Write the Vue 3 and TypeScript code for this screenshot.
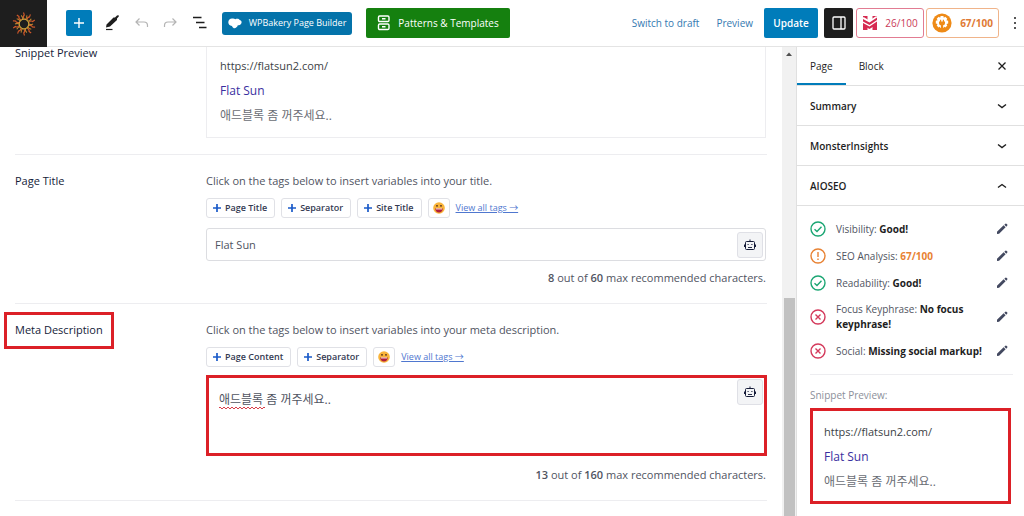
<script setup lang="ts">
import { ref } from 'vue'

interface Check {
  state: 'good' | 'warn' | 'bad'
  label: string
  value: string
}

const siteUrl = 'https://flatsun2.com/'
const pageTitle = ref('Flat Sun')
const metaDescription = ref('애드블록 좀 꺼주세요..')
const titleTags = ['Page Title', 'Separator', 'Site Title']
const descriptionTags = ['Page Content', 'Separator']
const panels = [
  { name: 'Summary', open: false },
  { name: 'MonsterInsights', open: false },
  { name: 'AIOSEO', open: true },
]
const checks: Check[] = [
  { state: 'good', label: 'Visibility:', value: 'Good!' },
  { state: 'warn', label: 'SEO Analysis:', value: '67/100' },
  { state: 'good', label: 'Readability:', value: 'Good!' },
  { state: 'bad', label: 'Focus Keyphrase:', value: 'No focus keyphrase!' },
  { state: 'bad', label: 'Social:', value: 'Missing social markup!' },
]
const rays = Array.from({ length: 20 }, (_, i) => i * 18)
</script>

<template>
  <div class="editor">
    <header class="topbar">
      <a class="site" href="#" aria-label="View pages">
        <svg viewBox="0 0 24 24" width="24" height="24" fill="none">
          <g v-for="(a, i) in rays" :key="a" :transform="`rotate(${a} 12 12)`">
            <path :d="i % 2 ? 'M12 7 Q13.200 5.500 12 3' : 'M12 7 Q10.500 4.500 12.300 3 L11.500 .5'" :stroke="i % 2 ? '#b98530' : '#d2592a'" stroke-width="1.100" />
          </g>
          <circle cx="12" cy="12" r="4.800" stroke="#c9a23c" stroke-width="1.200" fill="#1e1e1e" />
        </svg>
      </a>
      <div class="tools">
        <button class="add" aria-label="Add block">
          <svg viewBox="0 0 26 26" width="26" height="26"><path d="M13 8v10M8 13h10" stroke="#fff" stroke-width="1.400" /></svg>
        </button>
        <button class="tool" aria-label="Tools">
          <svg viewBox="0 0 18 18" width="18" height="18"><path d="M3.500 10.500 10.500 3.500l1.500 0 2-2q2.200-1 1.800 1L14 4.500l0 1.500L7 12.500 3 13.500z" fill="#1e1e1e" /><path d="M3 15.500h6.500" stroke="#1e1e1e" stroke-width="1.200" /></svg>
        </button>
        <button class="tool" aria-label="Undo" disabled>
          <svg viewBox="0 0 18 18" width="18" height="18" fill="none" stroke="#b4b4b4" stroke-width="1.200"><path d="M7.500 4.500 4 8l3.500 3.500M4 8h8q3.500 0 3.500 3.500V13" /></svg>
        </button>
        <button class="tool" aria-label="Redo" disabled>
          <svg viewBox="0 0 18 18" width="18" height="18" fill="none" stroke="#b4b4b4" stroke-width="1.200"><path d="M11.500 4.500 15 8l-3.500 3.500M15 8H7Q3.500 8 3.500 11.500V13" /></svg>
        </button>
        <button class="tool" aria-label="Document overview">
          <svg viewBox="0 0 18 18" width="18" height="18" stroke="#1e1e1e" stroke-width="1.300"><path d="M3 3.500h8.500M6 8.500h8.500M9 13.500h7.500" /></svg>
        </button>
      </div>
      <button class="bakery">
        <svg viewBox="0 0 14 11" width="14" height="11" fill="#fff"><path d="M4 .6C5.500.2 6.500.7 7.300 1.300 9 .5 11 .8 11.700 2c1.700.3 2.300 1.800 1.700 3.200C12.800 7 11 7.200 9.800 7.300 9.300 9.500 7 10.700 5.500 10 4.600 9.600 4.200 8.600 4 8 1.500 7.700.3 6 .3 4.200.3 2.200 2 .6 4 .6z" /></svg>
        <span>WPBakery Page Builder</span>
      </button>
      <button class="patterns">
        <svg viewBox="0 0 14 16" width="14" height="16" fill="none" stroke="#fff" stroke-width="1.400"><rect x="1.500" y="1" width="10.500" height="5.500" rx="1.200" /><rect x="1.500" y="9" width="10.500" height="5.500" rx="1.200" /><path d="M5 3.700h3.500M5 11.700h3.500" /></svg>
        <span>Patterns &amp; Templates</span>
      </button>
      <div class="actions">
        <button class="link">Switch to draft</button>
        <button class="link preview">Preview</button>
        <button class="update">Update</button>
        <button class="panel-toggle" aria-label="Settings">
          <svg viewBox="0 0 14 14" width="14" height="14" fill="none" stroke="#fff" stroke-width="1.300"><rect x="1" y="1" width="12" height="12" rx="1" /><path d="M9 1v12" /></svg>
        </button>
        <button class="score seo">
          <svg viewBox="0 0 16 16" width="16" height="16">
            <path d="M1 1h4.500v14H1zM10.500 1H15v14h-4.500z" fill="#d62a51" />
            <path d="M0 4.500 7.500 9 16 3.500" fill="none" stroke="#fff" stroke-width="6" />
            <path d="M1 4 7.500 7.500 15 2.500v2.600L7.500 10 1 6.600zM1 8l6.500 3.500L15 6.500v2.700L7.500 14 1 10.600z" fill="#d62a51" />
          </svg>
          <span>26/100</span>
        </button>
        <button class="score aio">
          <svg viewBox="0 0 20 20" width="20" height="20">
            <circle cx="10" cy="10" r="9.600" fill="#ee8a16" />
            <path d="M8.600 3h2.800l.4 1.700 1.500-.9 2 2-.9 1.500 1.800.5v2.700l-1.700.5.8 1.600-1.900 1.900-1.700-.9-.2 1.500H8.400l-.2-1.500-1.700.9-1.800-1.900.8-1.600-1.700-.5V7.800l1.800-.5-.9-1.500 2-2 1.500.9z" fill="#fff" />
            <path d="M7 8.500h1V6.800h1.200v1.700h1.600V6.800H12v1.700h1v1.700q0 1.700-2 2.200V17H9v-4.600q-2-.5-2-2.200z" fill="#ee8a16" />
          </svg>
          <span>67/100</span>
        </button>
        <button class="more" aria-label="Options">
          <svg viewBox="0 0 4 14" width="4" height="14" fill="#1e1e1e"><circle cx="2" cy="2" r="1" /><circle cx="2" cy="7" r="1" /><circle cx="2" cy="12" r="1" /></svg>
        </button>
      </div>
    </header>

    <div class="body">
      <main class="settings">
        <section class="row">
          <h2 class="name">Snippet Preview</h2>
          <div class="card snippet">
            <p class="url">{{ siteUrl }}</p>
            <p class="title">{{ pageTitle }}</p>
            <p class="desc">{{ metaDescription }}</p>
          </div>
        </section>

        <section class="row">
          <label class="name" for="page-title">Page Title</label>
          <div class="control">
            <p class="help">Click on the tags below to insert variables into your title.</p>
            <div class="tags">
              <button v-for="tag in titleTags" :key="tag" class="tag">
                <svg viewBox="0 0 8 8" width="8" height="8"><path d="M4 0v8M0 4h8" stroke="#1a5bc9" stroke-width="1.700" /></svg>{{ tag }}
              </button>
              <button class="tag emoji" aria-label="Insert emoji">
                <svg viewBox="0 0 12 12" width="12" height="12"><circle cx="6" cy="6" r="5.800" fill="#f9b43a" /><path d="M2.200 6.500h7.600q-.4 4-3.800 4t-3.800-4z" fill="#b01e3c" /><path d="M3 6.500h6v.9H3z" fill="#fff" /><circle cx="4" cy="3.800" r=".9" fill="#4b2a1b" /><circle cx="8" cy="3.800" r=".9" fill="#4b2a1b" /></svg>
              </button>
              <a class="all" href="#">View all tags →</a>
            </div>
            <div class="field">
              <input id="page-title" v-model="pageTitle" type="text">
              <button class="robot" aria-label="Generate title">
                <svg viewBox="0 0 12 12" width="12" height="12" fill="none" stroke="#141b38"><rect x="1.500" y="2.500" width="9" height="8" rx="1" /><path d="M6 .5v2M.5 5.500v2.500M11.500 5.500v2.500" /><path d="M3.500 5.500h1.200M7.300 5.500h1.200M4 8.500h4" stroke-width=".9" /></svg>
              </button>
            </div>
            <p class="count"><b>8</b> out of <b>60</b> max recommended characters.</p>
          </div>
        </section>

        <section class="row">
          <label class="name marked" for="meta-description">Meta Description</label>
          <div class="control">
            <p class="help">Click on the tags below to insert variables into your meta description.</p>
            <div class="tags">
              <button v-for="tag in descriptionTags" :key="tag" class="tag">
                <svg viewBox="0 0 8 8" width="8" height="8"><path d="M4 0v8M0 4h8" stroke="#1a5bc9" stroke-width="1.700" /></svg>{{ tag }}
              </button>
              <button class="tag emoji" aria-label="Insert emoji">
                <svg viewBox="0 0 12 12" width="12" height="12"><circle cx="6" cy="6" r="5.800" fill="#f9b43a" /><path d="M2.200 6.500h7.600q-.4 4-3.800 4t-3.800-4z" fill="#b01e3c" /><path d="M3 6.500h6v.9H3z" fill="#fff" /><circle cx="4" cy="3.800" r=".9" fill="#4b2a1b" /><circle cx="8" cy="3.800" r=".9" fill="#4b2a1b" /></svg>
              </button>
              <a class="all" href="#">View all tags →</a>
            </div>
            <div class="field area">
              <textarea id="meta-description" v-model="metaDescription" spellcheck="false"></textarea>
              <svg class="squiggle" viewBox="0 0 46 3" width="46" height="3" fill="none" stroke="#d9404a"><path d="M0 2q1-2 2 0t2 0 2 0 2 0 2 0 2 0 2 0 2 0 2 0 2 0 2 0 2 0 2 0 2 0 2 0 2 0 2 0 2 0 2 0 2 0 2 0 2 0 2 0" /></svg>
              <button class="robot" aria-label="Generate description">
                <svg viewBox="0 0 12 12" width="12" height="12" fill="none" stroke="#141b38"><rect x="1.500" y="2.500" width="9" height="8" rx="1" /><path d="M6 .5v2M.5 5.500v2.500M11.500 5.500v2.500" /><path d="M3.500 5.500h1.200M7.300 5.500h1.200M4 8.500h4" stroke-width=".9" /></svg>
              </button>
            </div>
            <p class="count"><b>13</b> out of <b>160</b> max recommended characters.</p>
          </div>
        </section>
      </main>

      <div class="scroll" aria-hidden="true">
        <svg viewBox="0 0 14 14" width="14" height="14"><path d="M4 9l3-3.500L10 9z" fill="#505050" /></svg>
        <div class="track"><div class="thumb"></div></div>
      </div>

      <aside class="sidebar">
        <nav class="tabs">
          <button class="tab active">Page</button>
          <button class="tab">Block</button>
          <button class="close" aria-label="Close settings">
            <svg viewBox="0 0 10 10" width="10" height="10"><path d="M1.500 1.500l7 7M8.500 1.500l-7 7" stroke="#1e1e1e" stroke-width="1.300" /></svg>
          </button>
        </nav>
        <button v-for="p in panels" :key="p.name" class="panel" :aria-expanded="p.open">
          {{ p.name }}
          <svg viewBox="0 0 10 6" width="10" height="6" fill="none" stroke="#1e1e1e" stroke-width="1.400"><path :d="p.open ? 'M1 4.500l4-3 4 3' : 'M1 1.500l4 3 4-3'" /></svg>
        </button>
        <ul class="checks">
          <li v-for="c in checks" :key="c.label" :class="c.state">
            <svg class="state" viewBox="0 0 16 16" width="16" height="16" fill="none" stroke="currentColor" stroke-width="1.400">
              <circle cx="8" cy="8" r="7" />
              <path v-if="c.state === 'good'" d="M4.500 8.200l2.500 2.300 4.500-4.700" />
              <path v-else-if="c.state === 'warn'" d="M8 4v5M8 10.500V12" />
              <path v-else d="M5.500 5.500l5 5M10.500 5.500l-5 5" />
            </svg>
            <span class="text">{{ c.label }} <b>{{ c.value }}</b></span>
            <button class="edit" :aria-label="`Edit ${c.label}`">
              <svg viewBox="0 0 12 12" width="12" height="12" fill="#434960"><path d="M1 8.700 7.600 2.300l2 2L3.100 10.700 1 11zM8.300 1.700 9.400.7q.5-.4 1 0l.9.9q.4.5 0 1l-1 1.100z" /></svg>
            </button>
          </li>
        </ul>
        <div class="side-preview">
          <p class="caption">Snippet Preview:</p>
          <div class="snippet boxed">
            <p class="url">{{ siteUrl }}</p>
            <p class="title">{{ pageTitle }}</p>
            <p class="desc">{{ metaDescription }}</p>
          </div>
        </div>
      </aside>
    </div>
  </div>
</template>

<style>
html,
body {
  margin: 0;
  background: #fff;
}
</style>

<style scoped>
* {
  box-sizing: border-box;
}
.editor {
  display: flex;
  flex-direction: column;
  height: 100vh;
  overflow: hidden;
  font-family: "Open Sans", "Noto Sans CJK KR", sans-serif;
  font-size: 11px;
  line-height: 20px;
  color: #434960;
}
button,
input,
textarea {
  font: inherit;
  color: inherit;
  margin: 0;
  padding: 0;
  border: 0;
  background: none;
}
svg {
  display: block;
  flex: none;
}
p,
h2,
ul {
  margin: 0;
  padding: 0;
}

.topbar {
  display: flex;
  align-items: center;
  flex: none;
  height: 47px;
  padding-right: 7px;
  border-bottom: 1px solid #e4e4e4;
  font-size: 10px;
  white-space: nowrap;
}
.topbar button {
  display: flex;
  align-items: center;
  justify-content: center;
}
.site {
  display: flex;
  align-items: center;
  justify-content: center;
  align-self: flex-start;
  width: 47px;
  height: 47px;
  background: #1e1e1e;
}
.tools {
  display: flex;
  align-items: center;
  gap: 11px;
  margin-left: 19px;
}
.add {
  width: 26px;
  height: 26px;
  border-radius: 2px;
  background: #007cba;
}
.bakery {
  gap: 7px;
  width: 130px;
  height: 23px;
  margin-left: 14px;
  border-radius: 3px;
  background: #0473aa;
  color: #fff;
  font-size: 9px;
  font-weight: 500;
}
.patterns {
  gap: 7px;
  width: 144px;
  height: 30px;
  margin-left: 14px;
  border-radius: 2px;
  background: #15800f;
  color: #fff;
  font-weight: 500;
}
.actions {
  display: flex;
  align-items: center;
  margin-left: auto;
}
.link {
  color: #3579b1;
}
.preview {
  margin: 0 11px 0 17px;
}
.update {
  width: 54px;
  height: 30px;
  margin-right: 6px;
  border-radius: 2px;
  background: #007cba;
  color: #fff;
  font-weight: 600;
}
.panel-toggle {
  width: 29px;
  height: 30px;
  margin-right: 3px;
  border-radius: 2px;
  background: #1e1e1e;
}
.score {
  height: 30px;
  margin-right: 2px;
  border: 1px solid currentColor;
  border-radius: 3px;
}
.seo {
  gap: 7px;
  width: 68px;
  border-color: #e27c92;
  color: #c93a58;
  font-weight: 500;
}
.aio {
  gap: 8px;
  width: 73px;
  margin-right: 14px;
  border-color: #f0b48a;
  color: #e07a35;
  font-weight: 700;
}

.body {
  display: flex;
  flex: 1;
  min-height: 0;
}
.settings {
  flex: 1;
  min-width: 0;
  padding: 0 15px;
  overflow: hidden;
}
.row {
  display: grid;
  grid-template-columns: 191px 1fr;
  align-items: start;
  padding: 16px 1px 15px 0;
  border-bottom: 1px solid #ededf0;
}
.row:first-child {
  padding: 0 1px 16px 0;
}
.row:first-child .name {
  line-height: 12px;
}
.name {
  justify-self: start;
  color: #141b38;
  font-size: 11px;
  font-weight: 500;
}
.marked {
  position: relative;
}
.marked::after {
  content: "";
  position: absolute;
  inset: -8px -11px -9px;
  border: 3px solid #dc2027;
}
.card {
  padding: 9px 13px 11px;
  border: 1px solid #ededf0;
  border-top: 0;
}
.snippet .url {
  color: #3c3f45;
}
.snippet .title {
  margin: 4px 0;
  color: #3a2fa0;
  font-size: 12px;
  line-height: 22px;
}
.snippet .desc {
  color: #6a6d74;
  font-size: 12px;
}
.tags {
  display: flex;
  align-items: center;
  gap: 6px;
  margin: 7px 0 10px;
}
.tag {
  display: flex;
  align-items: center;
  gap: 4px;
  height: 20px;
  padding: 0 7px 0 6px;
  border: 1px solid #e0e1e6;
  border-radius: 3px;
  color: #343a52;
  font-size: 9px;
  line-height: 18px;
  font-weight: 600;
}
.emoji {
  padding: 0 4px;
}
.all {
  color: #4f77cf;
  font-size: 9px;
}
.field {
  position: relative;
  display: flex;
  align-items: center;
  height: 33px;
  padding: 0 2px 0 8px;
  border: 1px solid #dcdde1;
  border-radius: 3px;
}
.field input,
.field textarea {
  flex: 1;
  min-width: 0;
  outline: none;
  color: #50545f;
}
.field textarea {
  align-self: stretch;
  padding-top: 12px;
  resize: none;
  font-size: 12px;
}
.area {
  align-items: flex-start;
  height: 81px;
  margin: -2px -1px 0 0;
  padding: 0 1px 0 10px;
  border: 3px solid #dc2027;
  border-radius: 0;
}
.robot {
  display: flex;
  align-items: center;
  justify-content: center;
  width: 26px;
  height: 26px;
  border: 1px solid #dfe0e6;
  border-radius: 3px;
  background: #f3f4f6;
}
.area .robot {
  margin-top: 1px;
}
.squiggle {
  position: absolute;
  left: 10px;
  top: 28px;
}
.count {
  margin-top: 7px;
  text-align: right;
}
.area + .count {
  margin-top: 9px;
}
.count b {
  font-weight: 600;
}
.help,
.count {
  color: #50545f;
}

.scroll {
  display: flex;
  flex-direction: column;
  flex: none;
  width: 14px;
  background: #f1f1f1;
}
.track {
  display: flex;
  flex: 1;
  flex-direction: column;
  justify-content: flex-end;
  padding: 0 1px 0 2px;
}
.thumb {
  height: 48%;
  background: #c1c1c1;
}

.sidebar {
  flex: none;
  width: 228px;
  border-left: 1px solid #e0e0e0;
  background: #fff;
  font-size: 10px;
}
.tabs {
  display: flex;
  height: 39px;
  padding-right: 17px;
  border-bottom: 1px solid #e0e0e0;
}
.tab {
  padding: 0 13px;
  color: #1e1e1e;
  font-weight: 500;
}
.active {
  box-shadow: inset 0 -2px #007cba;
}
.close {
  margin-left: auto;
}
.panel {
  display: flex;
  align-items: center;
  justify-content: space-between;
  width: 100%;
  height: 40px;
  padding: 0 17px 0 13px;
  border-bottom: 1px solid #e0e0e0;
  color: #1e1e1e;
  font-weight: 600;
}
.checks {
  display: flex;
  flex-direction: column;
  gap: 11px;
  margin: 0 11px 0 13px;
  padding: 15px 0;
  border-bottom: 1px solid #ededf0;
  list-style: none;
  line-height: 15px;
}
.checks li {
  display: flex;
  align-items: center;
  gap: 10px;
}
.text {
  flex: 1;
  color: #50545f;
}
.text b {
  color: #1e1e1e;
  font-weight: 700;
}
.edit {
  margin-right: 5px;
}
.checks .text {
  margin-right: -5px;
}
.good .state {
  color: #1ba673;
}
.warn .state,
.warn .text b {
  color: #e88233;
}
.bad .state {
  color: #d4395b;
}
.side-preview {
  padding: 10px 13px 0;
}
.caption {
  color: #8c8f9a;
}
.boxed {
  margin-top: 3px;
  padding: 11px 11px 9px;
  border: 3px solid #dc2027;
  font-size: 11px;
}
</style>
